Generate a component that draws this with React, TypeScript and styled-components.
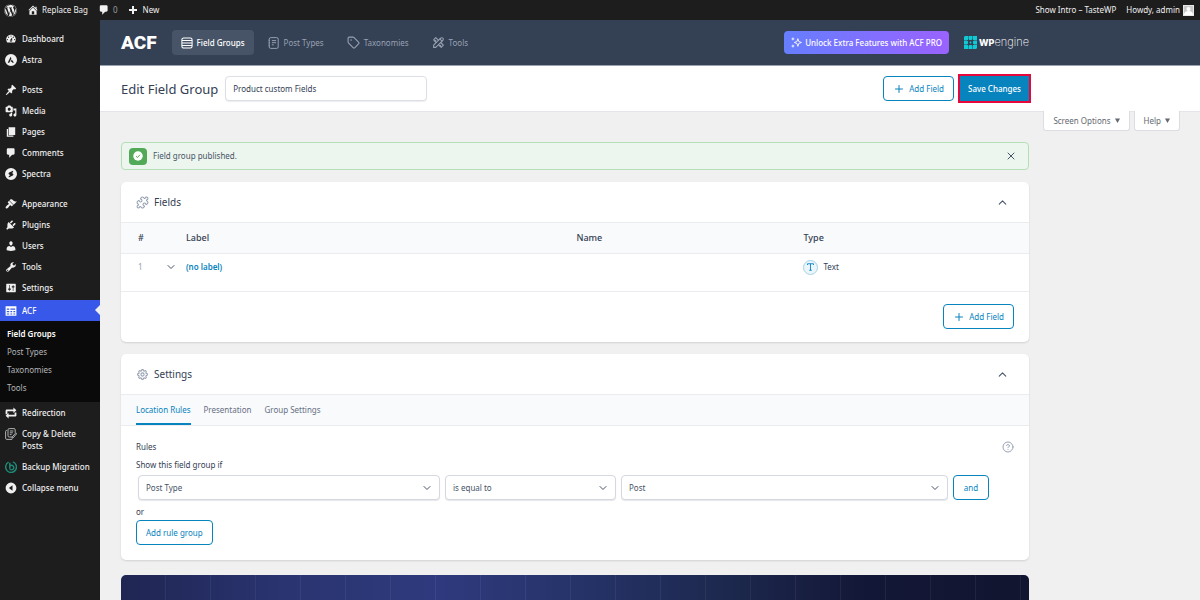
import React from 'react';
import styled, { createGlobalStyle, css } from 'styled-components';
import { ChevronDown, ChevronUp, Plus, Puzzle, Tag, X, CircleHelp } from 'lucide-react';
import { FaWordpress } from 'react-icons/fa';
import { TbTools } from 'react-icons/tb';
import { HiOutlineCog8Tooth } from 'react-icons/hi2';

const c = {
  bar: '#1d1d1d',
  sub: '#0a0a0a',
  accent: '#3858e9',
  header: '#344054',
  page: '#f0f0f0',
  blue: '#0783be',
  ink: '#344054',
  mute: '#667085',
  line: '#eaecf0',
  tint: '#f9fafb',
};

const Global = createGlobalStyle`
  *, *::before, *::after { box-sizing: border-box; }
  body { margin: 0; background: ${c.page}; color: ${c.ink}; font: 8px/12px "Noto Sans", "Open Sans", sans-serif; }
  button, input, select { font: inherit; color: inherit; margin: 0; }
  a { color: inherit; text-decoration: none; }
  svg { display: block; flex: none; }
  h1, h2, p { margin: 0; font-weight: 400; }
`;

/* ---------- Shell ---------- */
const Shell = styled.div`
  min-height: 100vh;
  display: grid;
  grid-template: 20px 1fr / 100px minmax(0, 1fr);
`;

const AdminBar = styled.header`
  grid-column: 1 / -1;
  display: flex;
  align-items: center;
  justify-content: space-between;
  padding: 0 6px 0 4px;
  background: ${c.bar};
  color: #f0f0f1;
`;

const BarGroup = styled.div`
  display: flex;
  align-items: center;
  gap: 10px;
`;

const BarLink = styled.a<{ $gap?: number }>`
  display: flex;
  align-items: center;
  gap: ${(p) => p.$gap ?? 3}px;
`;

const Count = styled.span`
  color: #9a9da1;
`;

const Avatar = styled.span`
  width: 11px;
  height: 11px;
  background: #c8c8c8;
  border: 1px solid #e8e8e8;
`;

/* ---------- Side menu ---------- */
const Side = styled.nav`
  background: ${c.bar};
  padding-top: 8px;
`;

const MenuGroup = styled.div<{ $top?: number }>`
  margin-top: ${(p) => p.$top ?? 0}px;
`;

const MenuItem = styled.a<{ $active?: boolean }>`
  position: relative;
  display: flex;
  align-items: flex-start;
  gap: 5px;
  padding: 5px 4px 4px 5px;
  color: #f0f0f1;
  font-weight: 500;
  line-height: 12px;
  ${(p) =>
    p.$active &&
    css`
      background: ${c.accent};
      color: #fff;
      &::after {
        content: '';
        position: absolute;
        right: 0;
        top: 5px;
        border: 5px solid transparent;
        border-right-color: ${c.page};
        border-left-width: 0;
      }
    `}
`;

const SubMenu = styled.div`
  background: ${c.sub};
  padding: 4px 0 5px 7px;
`;

const SubItem = styled.a<{ $active?: boolean }>`
  display: block;
  line-height: 18px;
  color: ${(p) => (p.$active ? '#fff' : '#b4b6b9')};
  font-weight: ${(p) => (p.$active ? 600 : 400)};
`;

/* ---------- Main area ---------- */
const Main = styled.main`
  display: flex;
  flex-direction: column;
  min-width: 0;
`;

const Column = styled.div`
  max-width: 949px;
  width: 100%;
  padding: 0 20px 0 21px;
`;

const TopNav = styled.div`
  background: ${c.header};
  border-bottom: 1px solid #98a2b3;
`;

const TopNavInner = styled(Column)`
  height: 45px;
  display: flex;
  align-items: center;
  gap: 15px;
`;

const Logo = styled.span`
  font: 900 19px/20px Roboto, sans-serif;
  color: #fff;
`;

const Tabs = styled.div`
  display: flex;
  gap: 5px;
  flex: 1;
`;

const NavTab = styled.a<{ $active?: boolean }>`
  display: flex;
  align-items: center;
  gap: 4px;
  height: 25px;
  padding: 0 9px;
  border-radius: 4px;
  color: ${(p) => (p.$active ? '#fff' : '#98a2b3')};
  background: ${(p) => (p.$active ? '#475467' : 'transparent')};
  font-weight: ${(p) => (p.$active ? 500 : 400)};
`;

const ProLink = styled.a`
  display: flex;
  align-items: center;
  gap: 3px;
  height: 23px;
  padding: 0 7px;
  border-radius: 4px;
  background: linear-gradient(90deg, #667eff, #9a62ff);
  color: #fff;
  font-weight: 500;
  white-space: nowrap;
`;

const WpEngine = styled.a`
  display: flex;
  align-items: center;
  gap: 2px;
  color: #fff;
  font: 200 11px/14px Inter, sans-serif;
  b { font-weight: 800; font-size: 9px; }
`;

const TitleBar = styled.div`
  background: #fff;
  box-shadow: 0 1px 0 #e4e5e8;
`;

const TitleInner = styled(Column)`
  height: 45px;
  display: flex;
  align-items: center;
  gap: 6px;
`;

const Title = styled.h1`
  font-size: 13px;
  line-height: 20px;
  white-space: nowrap;
`;

const TitleField = styled.input`
  width: 202px;
  height: 25px;
  margin: 0 auto 0 1px;
  padding: 0 7px;
  border: 1px solid #dcdfe6;
  border-radius: 4px;
  background: #fff;
  box-shadow: 0 1px 1px rgba(16, 24, 40, 0.08);
`;

const Button = styled.button<{ $primary?: boolean }>`
  display: inline-flex;
  align-items: center;
  justify-content: center;
  gap: 4px;
  height: 25px;
  padding: 0 9px;
  border: 1px solid ${c.blue};
  border-radius: 4px;
  white-space: nowrap;
  background: ${(p) => (p.$primary ? c.blue : '#fff')};
  color: ${(p) => (p.$primary ? '#fff' : c.blue)};
  font-weight: ${(p) => (p.$primary ? 500 : 400)};
`;

const SaveButton = styled(Button)`
  padding: 0 7px;
  border-radius: 0;
  outline: 2px solid #e8063c;
`;

const MetaLinks = styled.div`
  display: flex;
  justify-content: flex-end;
  gap: 4px;
  padding-right: 20px;
`;

const MetaButton = styled.button`
  display: flex;
  align-items: center;
  gap: 4px;
  height: 20px;
  padding: 0 9px;
  border: 1px solid #dcdde3;
  border-top: 0;
  border-radius: 0 0 3px 3px;
  background: #fff;
  color: #646970;
`;

const Content = styled(Column)`
  flex: 1;
  display: flex;
  flex-direction: column;
  gap: 12px;
  padding-top: 11px;
`;

const Notice = styled.div`
  display: flex;
  align-items: center;
  gap: 6px;
  height: 28px;
  padding: 0 11px 0 7px;
  border: 1px solid #b3dfb6;
  border-radius: 4px;
  background: #ecf6ee;
  color: #475467;
  p { flex: 1; }
`;

const IconButton = styled.button`
  display: flex;
  padding: 0;
  border: 0;
  background: none;
  color: #475467;
`;

const NoticeBadge = styled.span`
  display: grid;
  place-items: center;
  width: 18px;
  height: 17px;
  border-radius: 4px;
  background: #52aa59;
`;

const Card = styled.section`
  background: #fff;
  border-radius: 5px;
  box-shadow: 0 1px 2px rgba(16, 24, 40, 0.14);
`;

const CardHead = styled.div`
  display: flex;
  align-items: center;
  gap: 5px;
  height: 41px;
  padding: 0 20px 0 15px;
  color: #98a2b3;
  border-bottom: 1px solid ${c.line};
  h2 { flex: 1; font-size: 10px; line-height: 16px; color: ${c.ink}; }
`;

const Table = styled.table`
  width: 100%;
  table-layout: fixed;
  border-spacing: 0;
  text-align: left;
  th, td { padding: 0; border-bottom: 1px solid ${c.line}; }
  th { height: 31px; background: ${c.tint}; font-weight: 500; font-size: 9px; }
  td { height: 38px; padding-top: 4px; vertical-align: top; }
  th:first-child, td:first-child { padding-left: 17px; }
`;

const OrderCell = styled.div`
  display: flex;
  align-items: center;
  gap: 22px;
  height: 18px;
  color: #98a2b3;
`;

const LabelLink = styled.a`
  line-height: 18px;
  font-weight: 600;
  color: ${c.blue};
`;

const TypeCell = styled.div`
  display: flex;
  align-items: center;
  gap: 5px;
  height: 18px;
`;

const TypeBadge = styled.span`
  display: grid;
  place-items: center;
  width: 15px;
  height: 15px;
  border: 1px solid #a5d2e7;
  border-radius: 50%;
  background: #ebf5fa;
  color: ${c.blue};
`;

const CardFoot = styled.div`
  display: flex;
  justify-content: flex-end;
  padding: 12px 15px 13px;
`;

const RuleTabs = styled.div`
  display: flex;
  gap: 13px;
  height: 31px;
  padding: 0 15px;
  background: ${c.tint};
  border-bottom: 1px solid ${c.line};
`;

const RuleTab = styled.button<{ $active?: boolean }>`
  padding: 2px 0 0;
  border: 0;
  border-bottom: 2px solid ${(p) => (p.$active ? c.blue : 'transparent')};
  background: none;
  color: ${(p) => (p.$active ? c.blue : c.mute)};
`;

const CardBody = styled.div`
  padding: 15px;
  p { line-height: 17px; }
`;

const RulesHead = styled.div`
  display: flex;
  align-items: center;
  justify-content: space-between;
  height: 12px;
  margin-bottom: 3px;
`;

const RuleRow = styled.div`
  display: grid;
  grid-template-columns: 302fr 171fr 327fr 36px;
  gap: 5px;
  padding: 2px 25px 3px 2px;
`;

const SelectBox = styled.div`
  position: relative;
  select {
    display: block;
    appearance: none;
    width: 100%;
    height: 25px;
    padding: 0 24px 0 7px;
    border: 1px solid #d5d8e0;
    border-radius: 4px;
    background: #fff;
    color: #475467;
    box-shadow: 0 1px 1px rgba(16, 24, 40, 0.1);
  }
  svg { position: absolute; right: 7px; top: 7px; color: #475467; pointer-events: none; }
`;

const Banner = styled.section`
  flex: 1;
  min-height: 25px;
  margin-top: 3px;
  border-radius: 5px 5px 0 0;
  background:
    repeating-linear-gradient(90deg, transparent 0 44px, rgba(255, 255, 255, 0.06) 44px 45px),
    linear-gradient(90deg, #1f2653 0%, #2a3470 18%, #2e3a7d 35%, #27346c 48%, #1d294f 66%, #131737 82%, #12152f 100%);
`;

/* ---------- Icons ---------- */
const Glyph = ({ d, size = 12 }: { d: string; size?: number }) => (
  <svg width={size} height={size} viewBox="0 0 20 20" fill="currentColor" aria-hidden="true">
    <path fillRule="evenodd" d={d} />
  </svg>
);

const paths = {
  home: 'M16 8.5l1.53 1.53-1.06 1.06L10 4.6l-6.47 6.49-1.06-1.06L10 2.5l4 4v-2h2v4zm-6-2.46l6 5.99V18H4v-5.97zM12 17v-5H8v5h4z',
  comment: 'M5 2h9c1.1 0 2 .9 2 2v7c0 1.1-.9 2-2 2h-2l-5 5v-5H5c-1.1 0-2-.9-2-2V4c0-1.1.9-2 2-2z',
  plus: 'M8 2h4v6h6v4h-6v6H8v-6H2V8h6z',
  dashboard:
    'M3.76 16h12.48c1.1-1.37 1.76-3.11 1.76-5 0-4.42-3.58-8-8-8s-8 3.58-8 8c0 1.89.66 3.63 1.76 5zM10 4c.55 0 1 .45 1 1s-.45 1-1 1-1-.45-1-1 .45-1 1-1zM6 6c.55 0 1 .45 1 1s-.45 1-1 1-1-.45-1-1 .45-1 1-1zm8 0c.55 0 1 .45 1 1s-.45 1-1 1-1-.45-1-1 .45-1 1-1zm-5.37 5.55L12 7v6c0 1.1-.9 2-2 2s-2-.9-2-2c0-.57.24-1.08.63-1.45zM4 10c.55 0 1 .45 1 1s-.45 1-1 1-1-.45-1-1 .45-1 1-1zm12 0c.55 0 1 .45 1 1s-.45 1-1 1-1-.45-1-1 .45-1 1-1zm-5 3c0-.55-.45-1-1-1s-1 .45-1 1 .45 1 1 1 1-.45 1-1z',
  astra: 'M10 0a10 10 0 1 0 0 20 10 10 0 0 0 0-20zM9.4 4.5L4.5 14.5h2.6L10.6 7.6zM11.3 9l-2 4h2.2l.7 1.5h2.7z',
  post: 'M10.44 3.02l1.82-1.82 6.36 6.35-1.83 1.82c-1.05-.68-2.48-.57-3.41.36l-.75.75c-.92.93-1.04 2.35-.35 3.41l-1.83 1.82-2.41-2.41-2.8 2.79c-.42.42-3.38 2.71-3.8 2.29s1.86-3.39 2.28-3.81l2.79-2.79L4.1 9.36l1.83-1.82c1.05.69 2.48.57 3.4-.36l.75-.75c.93-.92 1.05-2.35.36-3.41z',
  media:
    'M13 11V4c0-.55-.45-1-1-1h-1.67L9 1H5L3.67 3H2c-.55 0-1 .45-1 1v7c0 .55.45 1 1 1h10c.55 0 1-.45 1-1zM7 4.5c1.38 0 2.5 1.12 2.5 2.5S8.38 9.5 7 9.5 4.5 8.38 4.5 7 5.62 4.5 7 4.5zM14 6h5v10.5c0 1.38-1.12 2.5-2.5 2.5S14 17.88 14 16.5s1.12-2.5 2.5-2.5c.17 0 .34.02.5.05V9h-3V6zm-4 8.05V13h2v3.5c0 1.38-1.12 2.5-2.5 2.5S7 17.88 7 16.5 8.12 14 9.5 14c.17 0 .34.02.5.05z',
  page: 'M6 15V2h11v13H6zm-1 1h9v2H3V5h2v11z',
  spectra: 'M10 0a10 10 0 1 0 0 20 10 10 0 0 0 0-20zM13.5 4.5L7 7.6c-1.6.9-1.4 2.6 0 3.3l1.9 1-2.6 1.3v2.6l6.7-3.4c1.4-.9 1.3-2.5 0-3.2l-1.9-1 2.4-1.2z',
  appearance:
    'M14.48 11.06L7.41 3.99l1.5-1.5c.5-.56 2.3-.47 3.51.32 1.21.8 1.43 1.28 2.91 2.1 1.18.64 2.45 1.26 4.45.85zm-.71.71L6.7 4.7 4.93 6.47c-.39.39-.39 1.02 0 1.41l1.06 1.06c.39.39.39 1.03 0 1.42-.6.6-1.43 1.11-2.21 1.69-.35.26-.7.53-1.01.84C1.43 14.23.4 16.08 1.4 17.07c.99 1 2.84-.03 4.18-1.36.31-.31.58-.66.85-1.02.57-.78 1.08-1.61 1.69-2.21.39-.39 1.02-.39 1.41 0l1.06 1.06c.39.39 1.02.39 1.41 0z',
  plugins:
    'M13.11 4.36L9.87 7.6 8 5.73l3.24-3.24c.35-.34 1.05-.2 1.56.32.52.51.66 1.21.31 1.55zm-8 1.77l.91-1.12 9.01 9.01-1.19.84c-.71.71-2.63 1.16-3.82 1.16H6.14L4.9 17.26c-.59.59-1.54.59-2.12 0-.59-.58-.59-1.53 0-2.12l1.24-1.24v-3.88c0-1.13.4-3.19 1.09-3.89zm7.26 3.97l3.24-3.24c.34-.35 1.04-.21 1.55.31.52.51.66 1.21.31 1.55l-3.24 3.25z',
  users:
    'M10 9.25c-2.27 0-2.73-3.44-2.73-3.44C7 4.02 7.82 2 9.97 2c2.16 0 2.98 2.02 2.71 3.81 0 0-.41 3.44-2.68 3.44zm0 2.57L12.72 10c2.39 0 4.52 2.33 4.52 4.53v2.49s-3.65 1.13-7.24 1.13c-3.65 0-7.24-1.13-7.24-1.13v-2.49c0-2.25 1.94-4.48 4.47-4.48z',
  tools:
    'M16.68 9.77c-1.34 1.34-3.3 1.67-4.95.99l-5.41 6.52c-.99.99-2.59.99-3.58 0s-.99-2.59 0-3.57l6.52-5.42c-.68-1.65-.35-3.61.99-4.95 1.28-1.28 3.12-1.62 4.72-1.06l-2.89 2.89 2.82 2.82 2.86-2.87c.53 1.58.18 3.39-1.08 4.65zM3.81 16.21c.4.39 1.04.39 1.43 0 .4-.4.4-1.04 0-1.43-.39-.4-1.03-.4-1.43 0-.39.39-.39 1.03 0 1.43z',
  settings:
    'M18 16V4c0-.55-.45-1-1-1H3c-.55 0-1 .45-1 1v12c0 .55.45 1 1 1h14c.55 0 1-.45 1-1zM8 11h1c.55 0 1 .45 1 1s-.45 1-1 1H8v1.5c0 .28-.22.5-.5.5s-.5-.22-.5-.5V13H6c-.55 0-1-.45-1-1s.45-1 1-1h1V5.5c0-.28.22-.5.5-.5s.5.22.5.5V11zm5-2h-1c-.55 0-1-.45-1-1s.45-1 1-1h1V5.5c0-.28.22-.5.5-.5s.5.22.5.5V7h1c.55 0 1 .45 1 1s-.45 1-1 1h-1v5.5c0 .28-.22.5-.5.5s-.5-.22-.5-.5V9z',
  acf: 'M1 2h18v16H1zM3 6v2h4V6zM9 6v2h8V6zM3 10v2h4v-2zM9 10v2h3v-2zM14 10v2h3v-2zM3 14v2h4v-2zM9 14v2h3v-2zM14 14v2h3v-2z',
  redirect: 'M3 4h11V1l5 4.500L14 10V7H4v5H1V6c0-1 1-2 2-2zM17 16H6v3l-5-4.500L6 10v3h10V9h3v5c0 1-1 2-2 2z',
  collapse: 'M10 1a9 9 0 1 0 0 18 9 9 0 0 0 0-18zM12.500 5.500v9L6.500 10z',
};

const CopyIcon = () => (
  <svg width="12" height="12" viewBox="0 0 20 20" fill="none" stroke="#b4b6b9" strokeWidth="1.600" aria-hidden="true">
    <path d="M17 8V3a2 2 0 0 0-2-2H7a2 2 0 0 0-2 2v10a2 2 0 0 0 2 2h5M3 4a2 2 0 0 0-2 2v11a2 2 0 0 0 2 2h9M8 5h6M8 8h5M8 11h3M12 15l6-7 1.500 1.500-6 7-2 .5z" />
  </svg>
);

const BackupIcon = () => (
  <svg width="12" height="12" viewBox="0 0 20 20" fill="none" stroke="#1f8a78" strokeWidth="2.400" aria-hidden="true">
    <path d="M6 2a9 9 0 1 0 7-.500M8 3v10M8 8.500a3.800 3.800 0 1 1 0 5" />
  </svg>
);

const FieldsIcon = () => (
  <svg width="12" height="12" viewBox="0 0 20 20" fill="none" stroke="currentColor" strokeWidth="1.700" aria-hidden="true">
    <rect x="1.500" y="1.500" width="17" height="17" rx="3" />
    <path d="M1.500 6h17M1.500 10h17M1.500 14h17" />
  </svg>
);

const PostTypesIcon = () => (
  <svg width="12" height="12" viewBox="0 0 20 20" fill="none" stroke="currentColor" strokeWidth="1.600" aria-hidden="true">
    <rect x="2" y="1" width="15" height="18" rx="2.500" />
    <path d="M1 5.500h2M1 10h2M1 14.500h2M6.500 6h7M6.500 9.500h7M6.500 13h3" />
  </svg>
);

const SparkIcon = () => (
  <svg width="11" height="11" viewBox="0 0 20 20" fill="none" stroke="currentColor" strokeWidth="1.600" strokeLinejoin="round" aria-hidden="true">
    <path d="M12.500 3l1.700 5.200L19 10l-4.800 1.800L12.500 17l-1.700-5.200L6 10l4.800-1.800zM3.500 1v5M1 3.500h5M3.500 14v5M1 16.500h5" />
  </svg>
);

const CheckIcon = () => (
  <svg width="10" height="10" viewBox="0 0 20 20" aria-hidden="true">
    <circle cx="10" cy="10" r="9.500" fill="#fff" />
    <path d="M6 10.500l3 2.500 5-5.500" fill="none" stroke="#52aa59" strokeWidth="2" />
  </svg>
);

const TextTypeIcon = () => (
  <svg width="7" height="8" viewBox="0 0 14 16" fill="none" stroke="currentColor" strokeWidth="1.800" aria-hidden="true">
    <path d="M1 4V1.500h12V4M7 1.500v13M4.500 14.500h5" />
  </svg>
);

const DownMark = () => (
  <svg width="5" height="5" viewBox="0 0 10 10" fill="currentColor" aria-hidden="true">
    <path d="M0 1h10L5 10z" />
  </svg>
);

const EngineMark = () => (
  <svg width="13" height="13" viewBox="0 0 26 26" fill="#0ecad4" aria-hidden="true">
    <path d="M0 2l2-2h6v8H0zM9 0h8v6l-2 2h-4L9 6zM18 0h8v8h-8zM0 9h6l2 2v4l-2 2H0zM26 9v8h-6l-2-2v-4l2-2zM0 18h8v8H0zM9 26v-6l2-2h4l2 2v6zM18 18h8v6l-2 2h-6z" />
    <circle cx="13" cy="13" r="2" />
  </svg>
);

/* ---------- Menu data ---------- */
type Entry = [string, React.ReactNode];
const g = (k: keyof typeof paths) => <Glyph d={paths[k]} />;

const groups: { top: number; items: Entry[] }[] = [
  { top: 0, items: [['Dashboard', g('dashboard')], ['Astra', g('astra')]] },
  {
    top: 9,
    items: [
      ['Posts', g('post')],
      ['Media', g('media')],
      ['Pages', g('page')],
      ['Comments', g('comment')],
      ['Spectra', g('spectra')],
    ],
  },
  {
    top: 9,
    items: [
      ['Appearance', g('appearance')],
      ['Plugins', g('plugins')],
      ['Users', g('users')],
      ['Tools', g('tools')],
      ['Settings', g('settings')],
    ],
  },
];

const lower: Entry[] = [
  ['Redirection', g('redirect')],
  ['Copy & Delete Posts', <CopyIcon />],
  ['Backup Migration', <BackupIcon />],
  ['Collapse menu', g('collapse')],
];

const Entries = ({ items }: { items: Entry[] }) => (
  <>
    {items.map(([label, icon]) => (
      <MenuItem href="#" key={label}>
        {icon}
        <span>{label}</span>
      </MenuItem>
    ))}
  </>
);

const Select = ({ label, value }: { label: string; value: string }) => (
  <SelectBox>
    <select aria-label={label} defaultValue={value}>
      <option>{value}</option>
    </select>
    <ChevronDown size={12} />
  </SelectBox>
);

export default function App() {
  return (
    <>
      <Global />
      <Shell>
        <AdminBar>
          <BarGroup>
            <BarLink href="#" aria-label="About WordPress"><FaWordpress size={13} /></BarLink>
            <BarLink href="#"><Glyph d={paths.home} />Replace Bag</BarLink>
            <BarLink href="#"><Glyph d={paths.comment} /><Count>0</Count></BarLink>
            <BarLink href="#" $gap={5}><Glyph d={paths.plus} size={10} />New</BarLink>
          </BarGroup>
          <BarGroup>
            <BarLink href="#">Show Intro – TasteWP</BarLink>
            <BarLink href="#">
              Howdy, admin
              <Avatar>
                <svg width="9" height="9" viewBox="0 0 9 9" fill="#fff" aria-hidden="true">
                  <circle cx="4.500" cy="3" r="2" />
                  <path d="M0 9c0-3 2-4 4.500-4S9 6 9 9z" />
                </svg>
              </Avatar>
            </BarLink>
          </BarGroup>
        </AdminBar>

        <Side aria-label="Main menu">
          {groups.map((group, i) => (
            <MenuGroup $top={group.top} key={i}>
              <Entries items={group.items} />
            </MenuGroup>
          ))}
          <MenuGroup $top={2}>
            <MenuItem href="#" $active>{g('acf')}<span>ACF</span></MenuItem>
            <SubMenu>
              <SubItem href="#" $active>Field Groups</SubItem>
              <SubItem href="#">Post Types</SubItem>
              <SubItem href="#">Taxonomies</SubItem>
              <SubItem href="#">Tools</SubItem>
            </SubMenu>
          </MenuGroup>
          <MenuGroup><Entries items={lower} /></MenuGroup>
        </Side>

        <Main>
          <TopNav>
            <TopNavInner>
              <Logo>ACF</Logo>
              <Tabs>
                <NavTab href="#" $active><FieldsIcon />Field Groups</NavTab>
                <NavTab href="#"><PostTypesIcon />Post Types</NavTab>
                <NavTab href="#"><Tag size={13} strokeWidth={2} />Taxonomies</NavTab>
                <NavTab href="#"><TbTools size={13} />Tools</NavTab>
              </Tabs>
              <ProLink href="#"><SparkIcon />Unlock Extra Features with ACF PRO</ProLink>
              <WpEngine href="#"><EngineMark /><span><b>WP</b>engine</span></WpEngine>
            </TopNavInner>
          </TopNav>

          <TitleBar>
            <TitleInner>
              <Title>Edit Field Group</Title>
              <TitleField aria-label="Field group title" defaultValue="Product custom Fields" />
              <Button type="button"><Plus size={12} strokeWidth={2} />Add Field</Button>
              <SaveButton type="submit" $primary>Save Changes</SaveButton>
            </TitleInner>
          </TitleBar>

          <MetaLinks>
            <MetaButton type="button">Screen Options<DownMark /></MetaButton>
            <MetaButton type="button">Help<DownMark /></MetaButton>
          </MetaLinks>

          <Content>
            <Notice role="status">
              <NoticeBadge><CheckIcon /></NoticeBadge>
              <p>Field group published.</p>
              <IconButton type="button" aria-label="Dismiss"><X size={12} /></IconButton>
            </Notice>

            <Card>
              <CardHead>
                <Puzzle size={13} strokeWidth={2} />
                <h2>Fields</h2>
                <IconButton type="button" aria-label="Collapse fields"><ChevronUp size={13} /></IconButton>
              </CardHead>
              <Table>
                <colgroup>
                  <col width="65" />
                  <col width="43%" />
                  <col width="25%" />
                  <col />
                </colgroup>
                <thead>
                  <tr><th>#</th><th>Label</th><th>Name</th><th>Type</th></tr>
                </thead>
                <tbody>
                  <tr>
                    <td><OrderCell>1<ChevronDown size={12} color="#475467" /></OrderCell></td>
                    <td><LabelLink href="#">(no label)</LabelLink></td>
                    <td />
                    <td><TypeCell><TypeBadge><TextTypeIcon /></TypeBadge>Text</TypeCell></td>
                  </tr>
                </tbody>
              </Table>
              <CardFoot>
                <Button type="button"><Plus size={12} strokeWidth={2} />Add Field</Button>
              </CardFoot>
            </Card>

            <Card>
              <CardHead>
                <HiOutlineCog8Tooth size={13} strokeWidth={2} />
                <h2>Settings</h2>
                <IconButton type="button" aria-label="Collapse settings"><ChevronUp size={13} /></IconButton>
              </CardHead>
              <RuleTabs>
                <RuleTab type="button" $active>Location Rules</RuleTab>
                <RuleTab type="button">Presentation</RuleTab>
                <RuleTab type="button">Group Settings</RuleTab>
              </RuleTabs>
              <CardBody>
                <RulesHead>Rules<CircleHelp size={12} strokeWidth={2} color="#98a2b3" /></RulesHead>
                <p>Show this field group if</p>
                <RuleRow>
                  <Select label="Rule subject" value="Post Type" />
                  <Select label="Rule operator" value="is equal to" />
                  <Select label="Rule value" value="Post" />
                  <Button type="button">and</Button>
                </RuleRow>
                <p>or</p>
                <Button type="button">Add rule group</Button>
              </CardBody>
            </Card>

            <Banner aria-label="ACF PRO" />
          </Content>
        </Main>
      </Shell>
    </>
  );
}
